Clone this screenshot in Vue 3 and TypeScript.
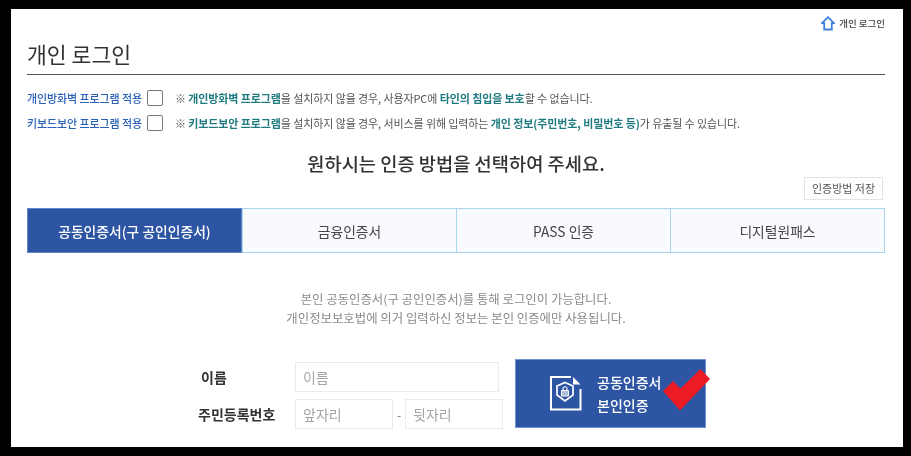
<script setup lang="ts">
const tabs: string[] = ['공동인증서(구 공인인증서)', '금융인증서', 'PASS 인증', '디지털원패스']
</script>

<template>
  <div class="frame">
    <div class="crumb">
      <svg class="home" width="14" height="15" viewBox="0 0 14 15" fill="none">
        <path d="M1 7.200 7 1.200l6 6H10.800v6.300H3.200V7.200z" stroke="#3d7fdc" stroke-width="1.800" stroke-linejoin="miter" />
      </svg>
      <span>개인 로그인</span>
    </div>
    <h1 class="title">개인 로그인</h1>

    <div class="notice">
      <div class="row">
        <span class="prog">개인방화벽 프로그램 적용</span>
        <span class="box"></span>
        <span class="msg">※ <b>개인방화벽 프로그램</b>을 설치하지 않을 경우, 사용자PC에 <b>타인의 침입을 보호</b>할 수 없습니다.</span>
      </div>
      <div class="row">
        <span class="prog">키보드보안 프로그램 적용</span>
        <span class="box"></span>
        <span class="msg">※ <b>키보드보안 프로그램</b>을 설치하지 않을 경우, 서비스를 위해 입력하는 <b>개인 정보(주민번호, 비밀번호 등)</b>가 유출될 수 있습니다.</span>
      </div>
    </div>

    <h2 class="choose">원하시는 인증 방법을 선택하여 주세요.</h2>
    <div class="save-row"><button class="save">인증방법 저장</button></div>

    <div class="tabs">
      <div v-for="(t, i) in tabs" :key="t" class="tab" :class="{ active: i === 0 }">{{ t }}</div>
    </div>

    <p class="desc">본인 공동인증서(구 공인인증서)를 통해 로그인이 가능합니다.<br />개인정보보호법에 의거 입력하신 정보는 본인 인증에만 사용됩니다.</p>

    <div class="form">
      <div class="fields">
        <div class="field first">
          <label class="lab">이름</label>
          <input class="inp name" placeholder="이름" />
        </div>
        <div class="field">
          <label class="lab">주민등록번호</label>
          <input class="inp part" placeholder="앞자리" />
          <span class="dash">-</span>
          <input class="inp part" placeholder="뒷자리" />
        </div>
      </div>
      <div class="cert">
        <svg width="32" height="35" viewBox="0 0 32 35" fill="none" stroke="#fff">
          <path d="M30.500 13v20.500H1V1h20" stroke-width="2" />
          <path d="M23 1v7.500h7.500z" fill="#fff" stroke="none" />
          <path d="M15 6.500l8 3.500v9l-8 6-8-6v-9z" stroke-width="1.700" />
          <path d="M11.500 14.500h7v5.500h-7z" fill="#fff" fill-opacity=".6" stroke-width="1" />
          <path d="M13 14.500v-1.800a2 2 0 0 1 4 0v1.800" stroke-width="1.100" />
        </svg>
        <span class="cert-text">공동인증서<br />본인인증</span>
        <svg class="check" width="48" height="42" viewBox="0 0 48 42">
          <path d="M0 22 10 12l7.500 7.400L37.500 0 47 10 17 41.500z" fill="#ec1c24" />
        </svg>
      </div>
    </div>
  </div>
</template>

<style scoped>
.frame {
  box-sizing: border-box;
  width: 892px;
  height: 438px;
  margin: 9px 0 0 11px;
  padding: 0 18px 0 16px;
  background: #fff;
  overflow: hidden;
  filter: blur(0.35px);
  font-family: "Noto Sans CJK KR", "Noto Sans", sans-serif;
  color: #333;
}
.crumb {
  display: flex;
  justify-content: flex-end;
  align-items: center;
  gap: 4px;
  height: 14px;
  margin-top: 7px;
  font-size: 9.500px;
  font-weight: 500;
  color: #444;
}
.title {
  margin: 12px 0 0;
  height: 32px;
  border-bottom: 1px solid #555;
  font-size: 21.600px;
  line-height: 24px;
  font-weight: 400;
  color: #333;
}
.notice { margin-top: 10px; }
.row {
  display: flex;
  align-items: center;
  height: 25px;
  font-size: 11px;
  letter-spacing: -0.1px;
}
.prog {
  width: 120px;
  color: #2a60b8;
  font-weight: 500;
  white-space: nowrap;
}
.box {
  box-sizing: border-box;
  width: 16px;
  height: 16px;
  border: 1px solid #777;
  border-radius: 2px;
  background: #fff;
}
.msg {
  margin-left: 12px;
  color: #555;
  white-space: nowrap;
}
.msg b {
  color: #1f7a80;
  font-weight: 700;
}
.choose {
  margin: 15px 0 0;
  text-align: center;
  font-size: 18.700px;
  line-height: 26px;
  font-weight: 500;
  color: #333;
}
.save-row {
  display: flex;
  justify-content: flex-end;
  margin: 1px 2px 0 0;
}
.save {
  box-sizing: border-box;
  width: 79px;
  height: 23px;
  padding: 0 0 2px;
  border: 1px solid #e4e4e4;
  background: #fff;
  font: 400 11px "Noto Sans CJK KR", sans-serif;
  color: #555;
}
.tabs {
  display: grid;
  grid-template-columns: repeat(4, 1fr);
  box-sizing: border-box;
  height: 45px;
  margin-top: 8px;
  background: #f8fafe;
  border: 1px solid #a9d5ee;
}
.tab {
  display: flex;
  align-items: center;
  justify-content: center;
  font-size: 13.800px;
  color: #444;
  border-left: 1px solid #a9d5ee;
}
.tab:first-child { border-left: 0; }
.tab.active {
  margin: -1px 0 -1px -1px;
  background: #2d55a4;
  color: #fff;
  font-weight: 500;
  border: 1px solid #5e86c8;
}
.desc {
  margin: 37px 0 0;
  text-align: center;
  font-size: 12.400px;
  line-height: 19px;
  color: #8a8a8a;
}
.form {
  display: flex;
  margin-top: 31px;
  padding-left: 158px;
  gap: 12px;
}
.fields {
  display: flex;
  flex-direction: column;
  gap: 7px;
  padding-top: 3px;
}
.field {
  display: flex;
  align-items: center;
}
.lab {
  width: 110px;
  padding-left: 13px;
  box-sizing: border-box;
  font-size: 14px;
  font-weight: 700;
  color: #333;
}
.first .lab { padding-left: 16px; }
.inp {
  box-sizing: border-box;
  height: 30px;
  padding: 0 7px;
  border: 1px solid #ebebeb;
  outline: 0;
  background: #fff;
  font: 400 14px "Noto Sans CJK KR", sans-serif;
  color: #333;
}
.inp::placeholder { color: #a4a4a4; opacity: 1; }
.name { width: 204px; margin-right: 4px; }
.part { width: 98px; }
.dash {
  width: 12px;
  text-align: center;
  font-size: 12px;
  color: #777;
}
.cert {
  position: relative;
  display: flex;
  align-items: center;
  box-sizing: border-box;
  width: 191px;
  height: 69px;
  padding-left: 34px;
  background: #2d55a4;
  border: 1px solid #6f93d2;
  color: #fff;
}
.cert-text {
  margin-left: 15px;
  font-size: 14px;
  line-height: 23px;
  font-weight: 500;
  white-space: nowrap;
}
.check {
  position: absolute;
  left: 147px;
  top: 9px;
}
</style>

<style>
html, body { background: #000; }
body { overflow: hidden; }
</style>
